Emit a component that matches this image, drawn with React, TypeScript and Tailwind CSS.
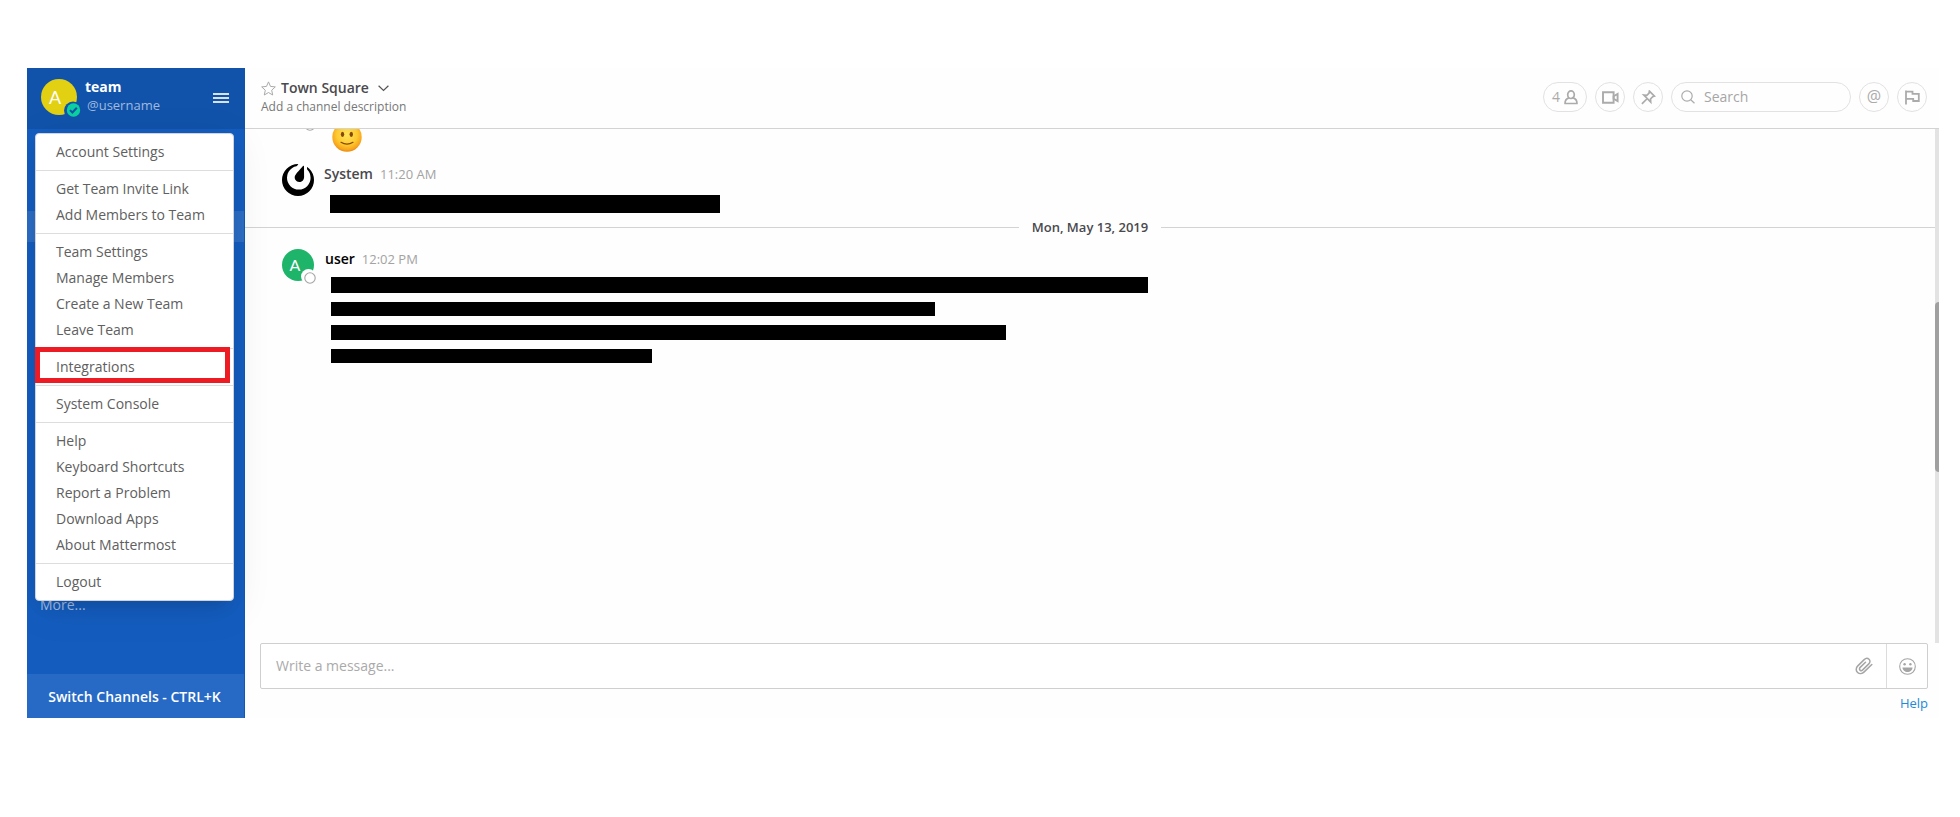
import React from "react";

const menuGroups: string[][] = [
  ["Account Settings"],
  ["Get Team Invite Link", "Add Members to Team"],
  ["Team Settings", "Manage Members", "Create a New Team", "Leave Team"],
  ["Integrations"],
  ["System Console"],
  ["Help", "Keyboard Shortcuts", "Report a Problem", "Download Apps", "About Mattermost"],
  ["Logout"],
];

function LetterA({ className }: { className: string }) {
  return (
    <span className={`flex items-center justify-center rounded-full font-['Lato',sans-serif] text-white ${className}`}>A</span>
  );
}

function MainMenu() {
  return (
    <nav
      aria-label="Main menu"
      className="absolute left-2 top-[65px] z-20 w-[199px] rounded-[4px] border border-[#d0d3d9] bg-white shadow-[0_8px_40px_rgba(0,0,0,0.09),0_10px_16px_-8px_rgba(0,0,0,0.15)]"
    >
      {menuGroups.map((group, i) => (
        <ul key={group[0]} className={i === 0 ? "py-[5px]" : "border-t border-[#dddddd] py-[5px]"}>
          {group.map((label) => (
            <li key={label} className="relative">
              <a href="#" className="block pl-5 text-sm leading-[26px] text-[#606060]">
                {label}
              </a>
              {label === "Integrations" && (
                <span className="pointer-events-none absolute -bottom-[3px] -left-px -top-[7px] right-[3px] border-[5px] border-[#ed1c24]" />
              )}
            </li>
          ))}
        </ul>
      ))}
    </nav>
  );
}

function Sidebar() {
  return (
    <aside className="relative flex w-[218px] shrink-0 flex-col bg-[#145dbf]">
      <header className="flex h-[61px] items-start bg-[#1153ab] pl-[14px] pr-4 pt-[11px]">
        <div className="relative">
          <LetterA className="h-9 w-9 bg-[#e2d013] pr-2 text-lg" />
          <svg className="absolute -bottom-1 -right-1" width="18" height="18" viewBox="0 0 18 18">
            <circle cx="10" cy="9.5" r="9" fill="#1153ab" />
            <circle cx="10.5" cy="9" r="6.7" fill="#0bd0a0" />
            <path d="M7 9.100l2.400 2.400 4.400-4.800" fill="none" stroke="#1153ab" strokeWidth="2" />
          </svg>
        </div>
        <div className="-mt-px ml-2 flex-1">
          <h1 className="text-sm font-bold leading-[18px] text-white">team</h1>
          <p className="pl-0.5 text-[13px] leading-[18px] text-[#a0bade]">@username</p>
        </div>
        <button aria-label="Menu" className="mt-[14px] flex w-4 flex-col gap-0.5">
          <span className="h-0.5 bg-[#d6e1f1]" />
          <span className="h-0.5 bg-[#d6e1f1]" />
          <span className="h-0.5 bg-[#d6e1f1]" />
        </button>
      </header>
      <div className="flex-1 border-r border-[#1257b3]">
        <div className="mt-[82px] h-[31px] bg-[#2c6dc5]" />
        <a href="#" className="ml-[13px] mt-[353px] block text-sm leading-5 text-[#a1bee5]">
          More...
        </a>
      </div>
      <button className="h-11 border-r border-[#1257b3] bg-[#276ac5] pr-0.5 pt-0.5 text-sm font-semibold text-white">
        Switch Channels - CTRL+K
      </button>
      <MainMenu />
    </aside>
  );
}

const round = "flex h-[30px] items-center justify-center rounded-full border border-[#e2e2e2] text-[#ababab]";

function ChannelHeader() {
  return (
    <header className="flex h-[61px] items-center justify-between border-b border-[#d3d3d3] pb-0.5 pl-4 pr-3">
      <div>
        <div className="flex items-center">
          <button aria-label="Favorite" className="mr-[5px] text-[#aaaaaa]">
            <svg width="15" height="15" viewBox="0 0 15 15" fill="none" stroke="currentColor" strokeWidth="1">
              <path d="M7.5 .9l2 4.5 4.8.5-3.6 3.3 1 4.8-4.2-2.5L3.300 14l1-4.800L.7 5.900l4.800-.5z" strokeLinejoin="round" />
            </svg>
          </button>
          <h2 className="text-sm font-semibold leading-5 text-[#4a494d]">Town Square</h2>
          <button aria-label="Channel menu" className="ml-[9px] text-[#555555]">
            <svg width="11" height="7" viewBox="0 0 11 7" fill="none" stroke="currentColor" strokeWidth="1.2">
              <path d="M.6 .8l4.900 4.700L10.400 .8" />
            </svg>
          </button>
        </div>
        <p className="text-xs leading-[18px] text-[#777777]">Add a channel description</p>
      </div>
      <div className="flex gap-2">
        <button aria-label="Members" className={`${round} w-11 gap-1 text-sm`}>
          4
          <svg width="14" height="15" viewBox="0 0 14 15" fill="none" stroke="currentColor" strokeWidth="1.700">
            <ellipse cx="7" cy="4.700" rx="3.300" ry="3.800" />
            <path d="M4.800 7.900C2.200 8.800 1 9.800 1 13.500h12c0-3.700-1.200-4.700-3.800-5.600" strokeLinejoin="round" />
          </svg>
        </button>
        <button aria-label="Start call" className={`${round} w-[30px]`}>
          <svg width="17" height="13" viewBox="0 0 17 13" fill="none" stroke="currentColor" strokeWidth="1.900">
            <path d="M1 1.200h10.600v10.600H1z" />
            <path d="M11.600 5.300l4-2.300v7l-4-2.300z" />
          </svg>
        </button>
        <button aria-label="Pinned posts" className={`${round} w-[30px]`}>
          <svg width="15" height="15" viewBox="0 0 15 15" fill="none" stroke="currentColor" strokeWidth="1.700">
            <path d="M8.400 1.200l5 5-1.700.5-2.200 2.300.2 3-6.900-6.900 3 .2L8.100 3z" />
            <path d="M5.800 9L.9 13.900" />
          </svg>
        </button>
        <label className="flex h-[30px] w-[180px] items-center gap-[9px] rounded-full border border-[#e2e2e2] pl-[9px] pr-3">
          <svg className="shrink-0" width="14" height="14" viewBox="0 0 14 14" fill="none" stroke="#ababab" strokeWidth="1.200">
            <circle cx="6" cy="6" r="5.200" />
            <path d="M9.700 9.700l3.800 3.600" />
          </svg>
          <input
            aria-label="Search"
            placeholder="Search"
            className="w-full min-w-0 bg-transparent text-sm text-[#555555] outline-none placeholder:text-[#a6a6a6]"
          />
        </label>
        <button aria-label="Recent mentions" className={`${round} w-[30px] pb-0.5 text-base`}>
          @
        </button>
        <button aria-label="Flagged posts" className={`${round} w-[30px]`}>
          <svg width="15" height="15" viewBox="0 0 15 15" fill="none" stroke="currentColor" strokeWidth="1.800">
            <path d="M1 .5v14M1 1.700h6.500v2.100h6.300v7.200H8.200V8.800H1" />
          </svg>
        </button>
      </div>
    </header>
  );
}

function OfflineBadge() {
  return (
    <svg className="absolute -bottom-[3px] -right-0.5" width="15" height="15" viewBox="0 0 15 15">
      <circle cx="7.500" cy="7.500" r="7.500" fill="#fff" />
      <circle cx="9" cy="9" r="5.200" fill="#fff" stroke="#a5a5a5" strokeWidth="1.100" />
    </svg>
  );
}

function SmileEmoji() {
  return (
    <svg width="30" height="30" viewBox="0 0 30 30" role="img" aria-label="slightly smiling face">
      <defs>
        <radialGradient id="face" cx="50%" cy="42%" r="58%">
          <stop offset="0" stopColor="#ffe45a" />
          <stop offset=".6" stopColor="#fdca30" />
          <stop offset=".88" stopColor="#f9a51c" />
          <stop offset="1" stopColor="#e88a12" />
        </radialGradient>
      </defs>
      <circle cx="15" cy="15" r="14.700" fill="url(#face)" />
      <ellipse cx="10.500" cy="12.300" rx="1.700" ry="2.600" fill="#86480c" />
      <ellipse cx="19.300" cy="12.300" rx="1.700" ry="2.600" fill="#86480c" />
      <path d="M9 20.300q6 3.700 12 0" fill="none" stroke="#86480c" strokeWidth="1.200" strokeLinecap="round" />
    </svg>
  );
}

function SystemLogo() {
  return (
    <svg width="32" height="32" viewBox="0 0 32 32" aria-hidden="true">
      <path fillRule="evenodd" d="M0 16a16 16 0 1 0 32 0a16 16 0 1 0-32 0zM5 13.800a11.800 11.800 0 1 0 23.600 0a11.800 11.800 0 1 0-23.600 0z" />
      <path fill="#fefefe" d="M17-1h10.500L25 3.200l.2 4L20 9l-6-5.500z" />
      <path d="M21 2c.5-.4 1 0 1 .5l.1 10.500c0 3-2.200 5-4.900 5-3-.1-5.200-3-4.300-6C13.400 10.200 19.100 4.200 21 2z" />
    </svg>
  );
}

function Post({
  avatar,
  name,
  nameClass,
  time,
  children,
}: {
  avatar: React.ReactNode;
  name: string;
  nameClass: string;
  time: string;
  children: React.ReactNode;
}) {
  return (
    <article className="flex pl-[37px]">
      <div className="relative h-8 w-8 shrink-0">{avatar}</div>
      <div className="min-w-0 flex-1 pl-[10px]">
        <div className="flex items-baseline leading-5">
          <h3 className={`text-sm font-semibold ${nameClass}`}>{name}</h3>
          <time className="ml-[7px] text-[13px] text-[#a3a3a3]">{time}</time>
        </div>
        {children}
      </div>
    </article>
  );
}

function Messages() {
  return (
    <div className="flex flex-1 overflow-hidden">
      <div className="min-w-0 flex-1">
        <div className="-mt-[33px] flex h-[68px] items-start gap-[18px] pl-[37px]">
          <div className="relative h-8 w-8 rounded-full bg-[#1eb56b]">
            <OfflineBadge />
          </div>
          <div className="pt-[26px]">
            <SmileEmoji />
          </div>
        </div>
        <Post avatar={<SystemLogo />} name="System" nameClass="text-[#4a494d]" time="11:20 AM">
          <div className="ml-1.5 mt-[11px] h-[18px] w-[390px] max-w-full bg-black" />
        </Post>
        <div className="mt-1 flex items-center gap-[13px]">
          <hr className="flex-1 border-[#d3d3d3]" />
          <span className="text-[13px] font-semibold leading-5 text-[#4a494d]">Mon, May 13, 2019</span>
          <hr className="flex-1 border-[#d3d3d3]" />
        </div>
        <div className="mt-3">
          <Post
            avatar={
              <>
                <LetterA className="h-8 w-8 bg-[#1eb56b] pr-1.5 text-base" />
                <OfflineBadge />
              </>
            }
            name="user"
            nameClass="pl-px text-black"
            time="12:02 PM"
          >
            <div className="ml-[7px] mt-2 flex flex-col gap-[9px]">
              <div className="h-4 w-[817px] max-w-full bg-black" />
              <div className="h-[14px] w-[604px] max-w-full bg-black" />
              <div className="h-[15px] w-[675px] max-w-full bg-black" />
              <div className="h-[14px] w-[321px] max-w-full bg-black" />
            </div>
          </Post>
        </div>
      </div>
      <div className="w-1 shrink-0 bg-[#e3e3e3] pt-[173px]">
        <div className="h-[170px] rounded-l-sm bg-[#a0a0a0]" />
      </div>
    </div>
  );
}

function Composer() {
  return (
    <footer className="pl-[15px] pr-[11px]">
      <div className="flex h-[46px] items-stretch rounded-[2px] border border-[#cfcfcf] bg-white">
        <input
          aria-label="Write a message"
          placeholder="Write a message..."
          className="min-w-0 flex-1 bg-transparent pl-[15px] text-sm text-[#555555] outline-none placeholder:text-[#aaaaaa]"
        />
        <button aria-label="Attach file" className="w-11 pl-[13px] text-[#a5a5a5]">
          <svg width="18" height="18" viewBox="0 0 18 18" fill="none" stroke="currentColor" strokeWidth="1.500" strokeLinecap="round">
            <path d="M16.800 7.500l-7.600 7.400C7.300 16.800 4.500 17.300 2.600 15.500.6 13.700.9 10.800 2.800 8.900l6.400-6.300c1.400-1.400 3.400-1.700 4.800-.4 1.400 1.300 1.200 3.300-.2 4.700l-6.100 6c-.8.8-2 .9-2.700.2-.8-.7-.6-1.900.2-2.700l5.300-5.100" />
          </svg>
        </button>
        <button aria-label="Emoji picker" className="flex w-[41px] items-center justify-center border-l border-[#dcdcdc] text-[#a5a5a5]">
          <svg width="17" height="17" viewBox="0 0 17 17">
            <circle cx="8.500" cy="8.500" r="7.800" fill="none" stroke="currentColor" strokeWidth="1.100" />
            <circle cx="5.600" cy="6.200" r="1.200" fill="currentColor" />
            <circle cx="11.400" cy="6.200" r="1.200" fill="currentColor" />
            <path d="M3.500 9.500h10c0 2.700-2.300 4.500-5 4.500s-5-1.800-5-4.500z" fill="currentColor" />
          </svg>
        </button>
      </div>
      <div className="flex h-[29px] items-center justify-end">
        <a href="#" className="text-[13px] text-[#2389d7]">
          Help
        </a>
      </div>
    </footer>
  );
}

export default function App() {
  return (
    <div className="bg-white pb-[99px] pl-[27px] pr-[21px] pt-[68px] font-['Open_Sans',sans-serif]">
      <div className="flex min-h-[650px] overflow-hidden bg-[#fefefe]">
        <Sidebar />
        <main className="flex min-w-0 flex-1 flex-col">
          <ChannelHeader />
          <Messages />
          <Composer />
        </main>
      </div>
    </div>
  );
}
